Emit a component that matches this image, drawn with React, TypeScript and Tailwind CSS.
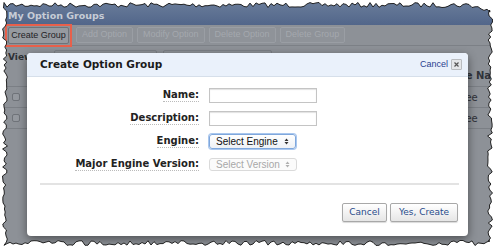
import React from "react"

// jagged "torn paper" edge, deterministic
function tornEdge(): string {
    let seed = 7
    const rnd = () => {
        seed = (seed * 16807) % 2147483647
        return (seed / 2147483647) - 0.5
    }
    const pts: string[] = []
    for (let x = 4; x <= 490; x += 3) pts.push(`${x},${(5 + rnd() * 5 + (x > 470 ? (x - 470) * 0.3 : 0)).toFixed(1)}`)
    for (let y = 10; y <= 242; y += 3) pts.push(`${(490 + rnd() * 5).toFixed(1)},${y}`)
    for (let x = 490; x >= 4; x -= 3) pts.push(`${x},${(243 + rnd() * 5).toFixed(1)}`)
    for (let y = 242; y >= 6; y -= 3) pts.push(`${(5 + rnd() * 5).toFixed(1)},${y}`)
    return "M" + pts.join(" L") + " Z"
}

const edge = tornEdge()

function Arrows({ color }: { color: string }) {
    return (
        <svg width="5" height="7" viewBox="0 0 5 7">
            <path d="M0.5 3 L2.5 0.5 L4.5 3 Z M0.5 4 L2.5 6.5 L4.5 4 Z" fill={color} />
        </svg>
    )
}

function ToolButton({ label }: { label: string }) {
    return (
        <div className="h-[16px] px-[5px] flex items-center rounded-[2px] border border-[#9a9ea4] bg-[#8f9399] text-[#a4a8ae] text-[9px] font-['Liberation_Sans',sans-serif]">
            {label}
        </div>
    )
}

function Label({ text }: { text: string }) {
    return (
        <div className="flex justify-end">
            <span className="font-['DejaVu_Sans',sans-serif] font-bold text-[10px] leading-[12px] text-[#222] border-b border-dotted border-[#bbb]">
                {text}
            </span>
        </div>
    )
}

function Row() {
    return (
        <div className="h-[21px] flex items-center border-b border-[#7b7f85] pl-[12px]">
            <div className="w-[8px] h-[8px] rounded-[2px] border border-[#6f7379] bg-[#94989e]" />
            <div className="ml-[447px] overflow-hidden whitespace-nowrap">
                <span className="-ml-[36px] inline-block">oracle-ee</span>
            </div>
        </div>
    )
}

export default function App() {
    return (
        <div className="relative w-[496px] h-[251px] overflow-hidden bg-[#8d9197]">
            {/* title bar */}
            <div className="h-[25px] flex items-end pb-[3px] pl-[8px] bg-gradient-to-b from-[#6b7e9b] to-[#52668a]">
                <span className="font-['DejaVu_Sans',sans-serif] font-bold text-[9.5px] leading-[12px] text-[#c6ccd6]">My Option Groups</span>
            </div>

            {/* toolbar */}
            <div className="h-[21px] flex items-start pl-[5px] gap-[4px] border-b border-[#7c8086]">
                <div className="-mt-[1px] border-2 border-[#e8604b] p-[1px]">
                    <div className="h-[17px] w-[61px] flex items-center justify-center rounded-[2px] border border-[#6f7379] bg-[#969aa0] text-[#1f2226] text-[9px] font-['Liberation_Sans',sans-serif]">
                        Create Group
                    </div>
                </div>
                <div className="pt-[2px] flex gap-[4px]">
                    <ToolButton label="Add Option" />
                    <ToolButton label="Modify Option" />
                    <ToolButton label="Delete Option" />
                    <ToolButton label="Delete Group" />
                </div>
            </div>

            {/* filter row */}
            <div className="h-[19px] flex items-start pl-[8px] pt-[4px] gap-[6px]">
                <span className="font-['DejaVu_Sans',sans-serif] font-bold text-[9px] leading-[14px] text-[#2d3035] w-[40px]">View</span>
                <div className="w-[103px] h-[16px] rounded-[2px] border border-[#7b7f85]" />
                <div className="w-[109px] h-[16px] rounded-[2px] border border-[#7b7f85]" />
            </div>

            {/* table */}
            <div className="font-['DejaVu_Sans',sans-serif] text-[10px] text-[#30333a]">
                <div className="h-[22px] flex items-center border-b border-[#7b7f85] pl-[467px] font-bold">
                    <div className="overflow-hidden whitespace-nowrap">
                        <span className="-ml-[33px] inline-block">Engine Name</span>
                    </div>
                </div>
                <Row />
                <Row />
            </div>

            {/* dialog */}
            <div className="absolute left-[27px] top-[53px] w-[441px] h-[183px] rounded-[4px] bg-white shadow-[0_3px_10px_rgba(0,0,0,0.45)] overflow-hidden">
                <div className="h-[24px] flex items-center justify-between pl-[13px] pr-[6px] bg-[#eaf1fb] border-b border-[#d6dfea]">
                    <span className="font-['DejaVu_Sans',sans-serif] font-bold text-[10.5px] text-[#1b1b1b]">Create Option Group</span>
                    <div className="flex items-center gap-[3px]">
                        <span className="font-['Liberation_Sans',sans-serif] text-[9px] text-[#2a3f8f]">Cancel</span>
                        <div className="w-[11px] h-[11px] flex items-center justify-center rounded-[1px] border border-[#b9bcc0] bg-[#e4e6e9]">
                            <svg width="5" height="5" viewBox="0 0 5 5">
                                <path d="M0.5 0.5 L4.5 4.5 M4.5 0.5 L0.5 4.5" stroke="#555" strokeWidth="1.2" />
                            </svg>
                        </div>
                    </div>
                </div>

                <div className="pt-[7px] grid grid-cols-[172px_1fr] auto-rows-[23px] items-center gap-x-[10px]">
                    <Label text="Name:" />
                    <div className="w-[108px] h-[15px] border border-[#c4c4c4] shadow-[inset_0_1px_1px_rgba(0,0,0,0.12)]" />
                    <Label text="Description:" />
                    <div className="w-[108px] h-[15px] border border-[#c4c4c4] shadow-[inset_0_1px_1px_rgba(0,0,0,0.12)]" />
                    <Label text="Engine:" />
                    <div className="w-[87px] h-[15px] flex items-center justify-between pl-[6px] pr-[6px] rounded-[3px] border border-[#7fa7dc] shadow-[0_0_0_1px_#a9c7ee] bg-gradient-to-b from-white to-[#eef1f5] font-['Liberation_Sans',sans-serif] text-[10px] text-[#111]">
                        Select Engine
                        <Arrows color="#333" />
                    </div>
                    <Label text="Major Engine Version:" />
                    <div className="w-[88px] h-[13px] flex items-center justify-between pl-[6px] pr-[6px] rounded-[3px] border border-[#dadada] bg-[#fbfbfb] font-['Liberation_Sans',sans-serif] text-[10px] text-[#a8a8a8]">
                        Select Version
                        <Arrows color="#b0b0b0" />
                    </div>
                </div>

                <div className="mt-[7px] ml-[13px] mr-[9px] h-[2px] bg-[#e3e3e3]" />

                <div className="mt-[18px] pr-[10px] flex justify-end gap-[3px] font-['DejaVu_Sans',sans-serif] text-[9px] text-[#284c8b]">
                    <div className="w-[45px] h-[19px] flex items-center justify-center rounded-[2px] border border-[#a8a8a8] bg-gradient-to-b from-white to-[#e6e6e6] shadow-[0_1px_1px_rgba(0,0,0,0.15)]">
                        Cancel
                    </div>
                    <div className="w-[68px] h-[19px] flex items-center justify-center rounded-[2px] border border-[#a8a8a8] bg-gradient-to-b from-white to-[#e6e6e6] shadow-[0_1px_1px_rgba(0,0,0,0.15)]">
                        Yes, Create
                    </div>
                </div>
            </div>

            {/* torn paper border */}
            <svg className="absolute inset-0" width="496" height="251" viewBox="0 0 496 251">
                <path d={`M0 0 H496 V251 H0 Z ${edge}`} fill="#ffffff" fillRule="evenodd" />
                <path d={edge} fill="none" stroke="#111" strokeWidth="0.9" />
            </svg>
        </div>
    )
}
